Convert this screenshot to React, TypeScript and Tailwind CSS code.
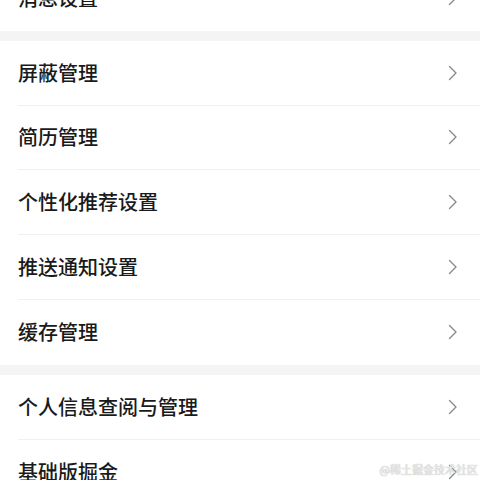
const items: string[][] = [
  ['消息设置'],
  ['屏蔽管理', '简历管理', '个性化推荐设置', '推送通知设置', '缓存管理'],
  ['个人信息查阅与管理', '基础版掘金'],
]

function Chevron() {
  return (
    <svg width="10" height="16" viewBox="0 0 10 16" fill="none">
      <path d="M1.5 1.5 L8 8 L1.5 14.5" stroke="#8a8a8a" strokeWidth="1.4" strokeLinecap="round" strokeLinejoin="round" />
    </svg>
  )
}

export default function App() {
  return (
    <div
      className="relative w-[480px] h-[480px] overflow-hidden bg-[#f4f4f4]"
      style={{ fontFamily: '"Noto Sans CJK SC", "Noto Sans", sans-serif' }}
    >
      <div className="-mt-[34px] flex flex-col gap-[10px]">
        {items.map((group, gi) => (
          <div key={gi} className="bg-white">
            {group.map((label, i) => (
              <div key={label} className="pl-[18px]">
                <div
                  className={
                    'flex items-center justify-between h-[64.8px] pr-[22px] ' +
                    (i < group.length - 1 ? 'border-b border-[#f0f0f0]' : '')
                  }
                >
                  <span className="text-[20px] font-medium text-[#1a1a1a]">{label}</span>
                  <Chevron />
                </div>
              </div>
            ))}
          </div>
        ))}
      </div>
      <div className="absolute right-[2px] bottom-[3px] text-[11px] text-[#ececec] [text-shadow:0_0_1px_#999]">
        @稀土掘金技术社区
      </div>
    </div>
  )
}
